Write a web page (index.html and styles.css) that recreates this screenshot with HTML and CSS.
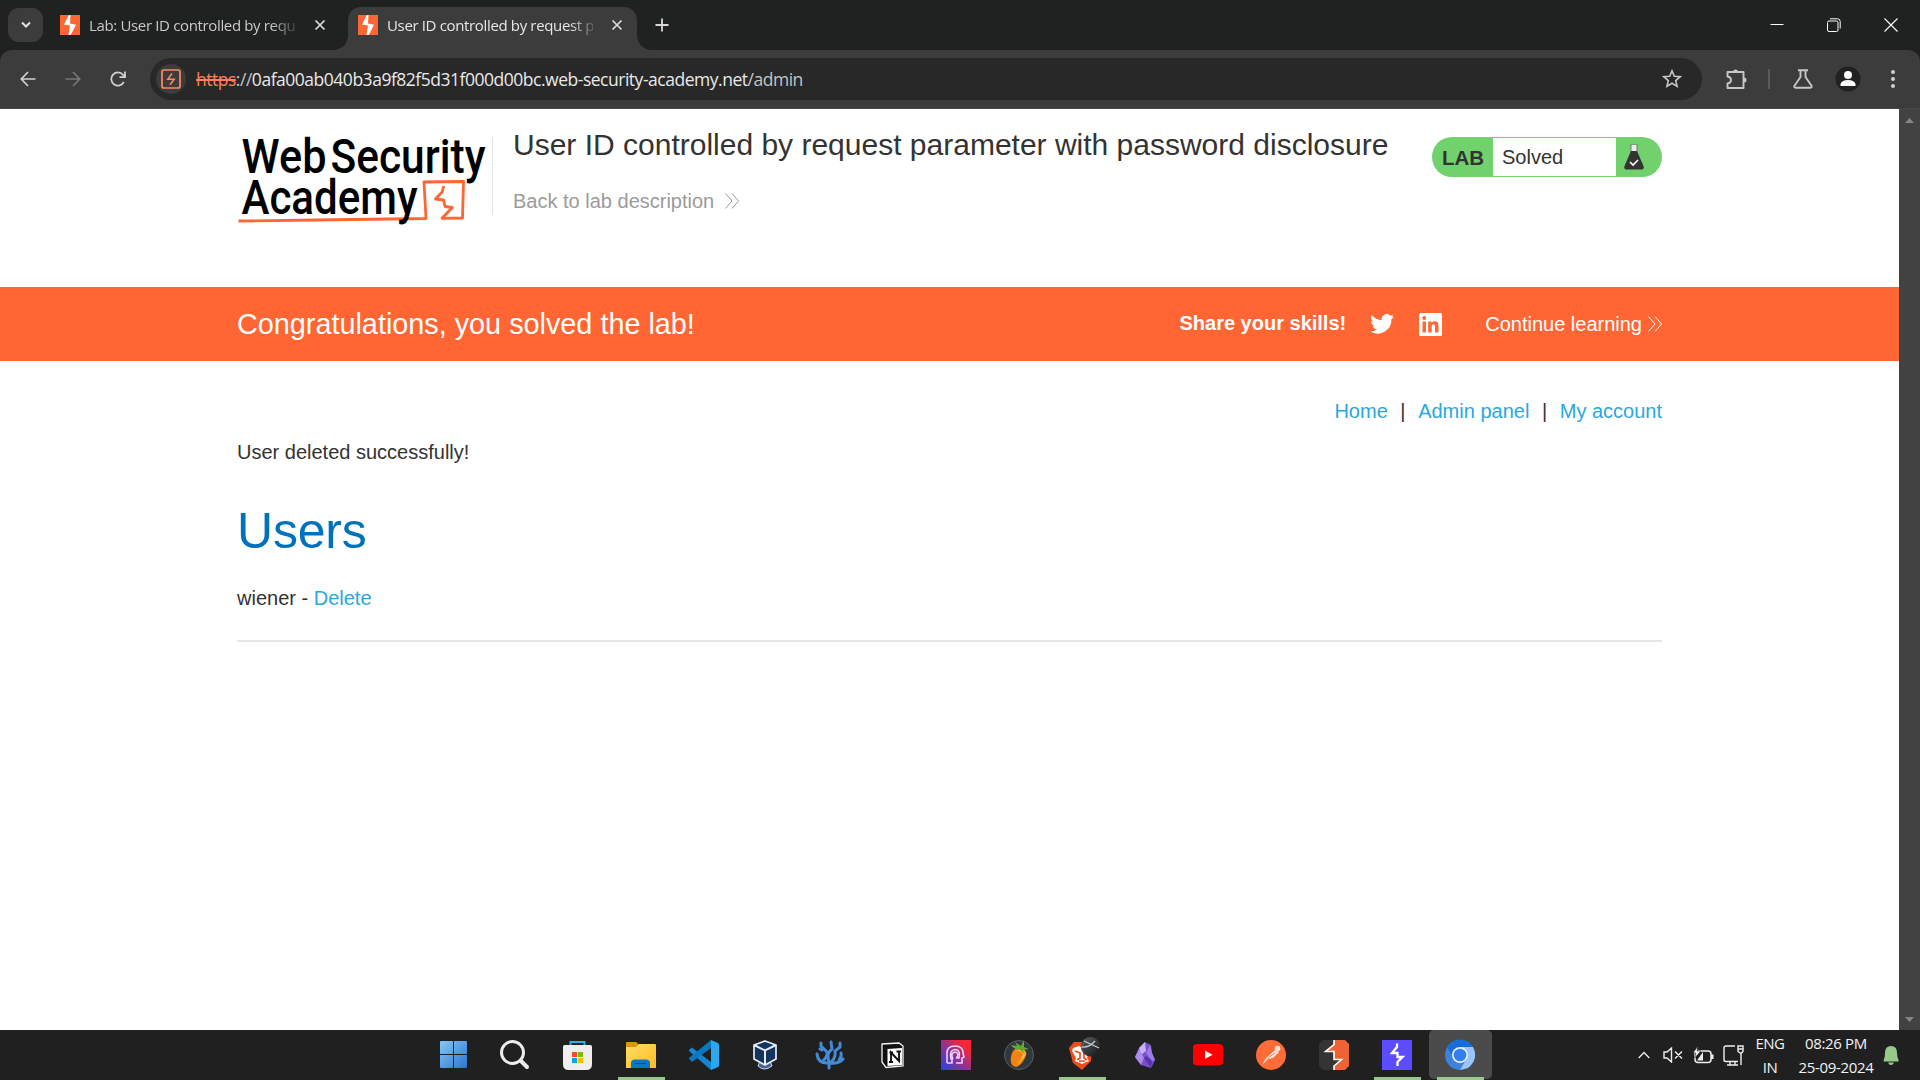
FILE: index.html
```html
<!DOCTYPE html>
<html lang="en">
<head>
<meta charset="utf-8">
<title>User ID controlled by request parameter with password disclosure</title>
<link rel="stylesheet" href="styles.css">
</head>
<body>
<svg class="defs" width="0" height="0">
  <symbol id="burp" viewBox="0 0 20 20"><rect width="20" height="20" fill="#ff6633"/><path d="M10.500 0L8.800 0L4 9.600L10 10.600L8.500 20L10.800 20L16 9.800L10 8.600Z" fill="#fff"/></symbol>
  <symbol id="x" viewBox="0 0 12 12"><path d="M1.500 1.500L10.500 10.500M10.500 1.500L1.500 10.500" stroke="#dcdcdc" stroke-width="1.700"/></symbol>
  <symbol id="more" viewBox="0 0 14 16"><path d="M.5 .5L7 8L.5 15.500M7 .5L13.500 8L7 15.500" fill="none" stroke="currentColor"/></symbol>
</svg>

<header class="tabs">
  <button class="tab-search"><svg width="10" height="8" viewBox="0 0 10 8"><path d="M1 1.500L5 5.500L9 1.500" fill="none" stroke="#e3e3e3" stroke-width="2"/></svg></button>
  <div class="tab">
    <svg class="favicon"><use href="#burp"/></svg>
    <span class="tab-title">Lab: User ID controlled by request</span>
    <svg class="close"><use href="#x"/></svg>
  </div>
  <div class="tab active">
    <svg class="favicon"><use href="#burp"/></svg>
    <span class="tab-title">User ID controlled by request parameter</span>
    <svg class="close"><use href="#x"/></svg>
  </div>
  <svg class="new-tab" width="14" height="14" viewBox="0 0 14 14"><path d="M7 .5V13.500M.5 7H13.500" stroke="#d8d8d8" stroke-width="1.800"/></svg>
  <div class="window-controls">
    <svg width="14" height="14" viewBox="0 0 14 14"><path d="M.5 6.500H13.500" stroke="#fff"/></svg>
    <svg width="14" height="14" viewBox="0 0 14 14" fill="none" stroke="#fff"><rect x=".5" y="3" width="10.500" height="10.500" rx="1.500"/><path d="M3 .8H10.500Q13.200 .8 13.200 3.500V10.500"/></svg>
    <svg width="14" height="14" viewBox="0 0 14 14"><path d="M.5 .5L13.500 13.500M13.500 .5L.5 13.500" stroke="#fff" stroke-width="1.100"/></svg>
  </div>
</header>

<div class="toolbar-bg"><div class="toolbar">
  <div class="nav-buttons">
    <svg width="16" height="16" viewBox="0 0 16 16" fill="none" stroke="#d0d0d0" stroke-width="1.700"><path d="M15.500 8H1.500M8 1L1.300 8L8 15"/></svg>
    <svg width="16" height="16" viewBox="0 0 16 16" fill="none" stroke="#777" stroke-width="1.700"><path d="M.5 8H14.500M8 1L14.700 8L8 15"/></svg>
    <svg width="16" height="16" viewBox="0 0 16 16" fill="none" stroke="#d0d0d0" stroke-width="1.800"><path d="M13.800 11A6.600 6.600 0 1 1 13 3.800L15 6M15 .5V6.200H9.500"/></svg>
  </div>
  <div class="omnibox">
    <span class="site"><svg width="20" height="20" viewBox="0 0 20 20" fill="none" stroke="#ff8a65" stroke-width="1.700"><rect x="1" y="1" width="18" height="18" rx="2"/><path d="M11 4.500L6.800 10.200H13.200L9 15.800" stroke-width="1.500"/></svg></span>
    <span class="url"><s>https</s><span class="scheme">://</span>0afa00ab040b3a9f82f5d31f000d00bc.web-security-academy.net<span class="path">/admin</span></span>
    <svg class="star" width="20" height="20" viewBox="0 0 20 20"><path d="M10 1.800L12.300 7.200L18.200 7.700L13.700 11.600L15.100 17.400L10 14.300L4.900 17.400L6.300 11.600L1.800 7.700L7.700 7.200Z" fill="none" stroke="#c7c7c7" stroke-width="1.600"/></svg>
  </div>
  <div class="tools">
    <svg width="22" height="22" viewBox="0 0 22 22"><path d="M2.500 4H18.500V20H2.500V15.500Q6 15 6 12T2.500 8.500Z" fill="none" stroke="#c7c7c7" stroke-width="1.900" stroke-linejoin="round"/><path d="M8 4A2.500 2.500 0 0 1 13 4ZM19 9.500A2.500 2.500 0 0 1 19 14.500Z" fill="#c7c7c7"/></svg>
    <i></i>
    <svg width="20" height="20" viewBox="0 0 20 20"><path d="M5 1.300H15M7.500 1.500V8L1.300 17Q1 18.700 2.500 18.700H17.500Q19 18.700 18.700 17L12.500 8V1.500" fill="none" stroke="#c7c7c7" stroke-width="1.900"/></svg>
    <svg width="26" height="26" viewBox="0 0 26 26"><circle cx="13" cy="13" r="12.500" fill="#202121"/><circle cx="13" cy="9" r="4" fill="#fff"/><path d="M5.500 20V18Q7 14 13 14T20.500 18V20Z" fill="#fff"/></svg>
    <svg width="6" height="20" viewBox="0 0 6 20" fill="#d0d0d0"><circle cx="3" cy="3" r="2"/><circle cx="3" cy="10" r="2"/><circle cx="3" cy="17" r="2"/></svg>
  </div>
</div></div>

<div class="viewport">
  <main class="page">
    <section class="container lab-header">
      <svg class="logo" width="256" height="90" viewBox="0 0 256 90">
        <g fill="none" stroke="#ff6633" stroke-width="2.800" stroke-linejoin="round"><path d="M1.500 84Q40 83.500 80 83T189 81.500L187 45L226.500 44.500L225.500 81L205 81.300L215.300 70.500L208 69.500L206.500 63L198.500 62L205.300 54.700L206.700 49"/></g>
        <g class="logo-text"><text x="4.500" y="35.700" textLength="85" lengthAdjust="spacingAndGlyphs">Web</text><text x="93.500" y="35.700" textLength="155" lengthAdjust="spacingAndGlyphs">Security</text><text x="4.500" y="77" textLength="176" lengthAdjust="spacingAndGlyphs">Academy</text></g>
      </svg>
      <div class="title">
        <h2>User ID controlled by request parameter with password disclosure</h2>
        <a>Back to lab description <svg width="14" height="16"><use href="#more"/></svg></a>
      </div>
      <div class="status"><b>LAB</b><p>Solved</p><span><svg width="20" height="26" viewBox="0 0 20 26"><path d="M6 1H14" stroke="#777"/><path d="M7 1V8H13V1" fill="#eee" stroke="#777"/><path d="M7 7H13L19.500 22Q20.500 25.500 17 25.500H3Q-.5 25.500 .5 22Z" fill="#333332"/><path d="M6 18L9 21L14 16" fill="none" stroke="#fff" stroke-width="1.600"/></svg></span></div>
    </section>
    <section class="banner"><div class="container">
      <h4>Congratulations, you solved the lab!</h4>
      <div class="share">
        <b>Share your skills!</b>
        <svg class="twitter" width="24" height="20" viewBox="0 0 24 20"><path d="M24 2.400a10 10 0 0 1-2.800.8A5 5 0 0 0 23.300.5a10 10 0 0 1-3.100 1.200A4.900 4.900 0 0 0 11.800 6.200 14 14 0 0 1 1.700 1 4.900 4.900 0 0 0 3.200 7.600 5 5 0 0 1 1 7a4.900 4.900 0 0 0 3.900 4.800 5 5 0 0 1-2.200.1 4.900 4.900 0 0 0 4.600 3.400A10 10 0 0 1 0 17.300 14 14 0 0 0 21.500 5a10 10 0 0 0 2.500-2.600Z" fill="#fff"/></svg>
        <svg class="linkedin" width="23" height="23" viewBox="0 0 23 23"><rect width="23" height="23" rx="1.500" fill="#fff"/><path d="M3.500 8.500H7V19.500H3.500ZM9.200 8.500H12.500V10C14.500 7.300 19.500 7.500 19.500 12.500V19.500H16V13.500C16 10.300 12.700 10.500 12.700 13.500V19.500H9.200Z" fill="#ff6633"/><circle cx="5.200" cy="5" r="2" fill="#ff6633"/></svg>
        <a>Continue learning <svg width="14" height="16"><use href="#more"/></svg></a>
      </div>
    </div></section>
    <section class="container content">
      <nav><a>Home</a><i>|</i><a>Admin panel</a><i>|</i><a>My account</a></nav>
      <p class="message">User deleted successfully!</p>
      <h1>Users</h1>
      <p class="user">wiener - <a>Delete</a></p>
      <hr>
    </section>
  </main>
  <aside class="scrollbar"><svg width="9" height="5" viewBox="0 0 9 5"><path d="M0 5L4.500 0L9 5Z" fill="#858585"/></svg><svg width="9" height="5" viewBox="0 0 9 5"><path d="M0 0L4.500 5L9 0Z" fill="#858585"/></svg></aside>
</div>

<footer class="taskbar">
  <div class="apps">
    <div class="app start"><svg viewBox="0 0 30 30"><defs><linearGradient id="win" x2="1" y2="1"><stop stop-color="#83c9f5"/><stop offset="1" stop-color="#2e73ce"/></linearGradient><linearGradient id="fold" x2="1" y2="1"><stop stop-color="#ffdc68"/><stop offset="1" stop-color="#fbbd22"/></linearGradient><linearGradient id="head" x1="0" y1="1" x2="1" y2="0"><stop stop-color="#2044e8"/><stop offset=".5" stop-color="#9b3188"/><stop offset=".8" stop-color="#f52736"/></linearGradient><linearGradient id="ball" x2="1" y2="1"><stop stop-color="#60656b"/><stop offset="1" stop-color="#101316"/></linearGradient></defs><path d="M3 1H15V14H2V2Q2 1 3 1ZM16 1H28Q29 1 29 2V14H16ZM2 15H15V28H3Q2 28 2 27ZM16 15H29V27Q29 28 28 28H16Z" fill="url(#win)"/></svg></div>
    <div class="app"><svg viewBox="0 0 30 30" fill="none" stroke="#ededed"><circle cx="12.500" cy="12.500" r="11" stroke-width="3"/><path d="M20.500 20.500L27 27" stroke-width="4" stroke-linecap="round"/></svg></div>
    <div class="app"><svg viewBox="0 0 30 30"><path d="M7.500 6V2H21.500V6" fill="none" stroke="#2bb0ea" stroke-width="2"/><path d="M1.500 5H27.500Q29 5 29 6.500V24Q29 30 23.500 30H5.500Q0 30 0 24V6.500Q0 5 1.500 5Z" fill="#eee"/><path d="M9 12H14V17H9Z" fill="#f25022"/><path d="M15 12H20V17H15Z" fill="#7fba00"/><path d="M9 18H14V23H9Z" fill="#00a4ef"/><path d="M15 18H20V23H15Z" fill="#ffb900"/></svg></div>
    <div class="app running"><svg viewBox="0 0 30 30"><path d="M0 3Q0 2 1 2H10L13 4.500L11 8H0Z" fill="#dc9700"/><path d="M0 7H10L13 4H29Q30 4 30 5V28H0Z" fill="url(#fold)"/><path d="M5 28V23Q5 19.500 9 19.500H20Q24 19.500 24 23V28Z" fill="#0b76c5"/><path d="M9 23.500H20" stroke="#064b83"/></svg></div>
    <div class="app"><svg viewBox="0 0 30 30"><path d="M0 10L3 7.500L22 22V30L0 11Z" fill="#1187d3"/><path d="M0 19L3 22L22 8V0L0 18Z" fill="#0878c2"/><path d="M22 0L29 3Q30 4 30 5V25Q30 27 29 27L22 30Z" fill="#27a8f1"/></svg></div>
    <div class="app vbox"><svg viewBox="0 0 30 30"><path d="M10 21L8 26Q14 32 22 26L20 21" fill="#46628d" stroke="#cbd8ed"/><path d="M15 1L26 5V19L15 25L4 19V5Z" fill="#12345f" stroke="#e6edf7" stroke-width="1.700"/><path d="M4 5L15 10.500L26 5M15 10.500V25" fill="none" stroke="#e6edf7" stroke-width="2"/></svg></div>
    <div class="app"><svg viewBox="0 0 30 30" fill="none" stroke="#438bd6" stroke-width="3" stroke-linecap="round"><path d="M14 28V23Q3 24 2 14M14 23Q24 24 28 19M8 21Q13 16 12 12L6 6V3M7 10L5 9M14 22Q11 13 17 9L16 2M17 21Q21 17 20 11L25 7V3M24 20Q27 17 26 13"/></svg></div>
    <div class="app"><svg viewBox="0 0 30 30"><path d="M4 4L21 3L25 6V26L8 27.500L4 22Z" fill="#111" stroke="#f4f4f4" stroke-width="1.300"/><path d="M9.500 9L24 8V25L9.500 26Z" fill="#fff"/><path d="M13 21.500V12.500L21 21V11.500M11.500 12.500H15M11 22H15M18.500 11.500H23" fill="none" stroke="#111" stroke-width="1.900"/></svg></div>
    <div class="app"><svg viewBox="0 0 30 30"><path d="M0 0H30V30H0Z" fill="url(#head)"/><g fill="none" stroke="#e7cfff" stroke-width="1.600"><path d="M6 23H11V19M6 23V13Q6 6 14 6Q22 6 22 13L23 17L21 18V23H15"/><path d="M12 19H10Q8 10 14 9.500Q20 10 18 18H15M12 19Q9 13 14 12Q19 13 15.500 18"/></g></svg></div>
    <div class="app"><svg viewBox="0 0 30 30"><circle cx="15" cy="15" r="14.500" fill="#30383d" stroke="#566067"/><path d="M8 13Q11 7 17 8Q25 11 21 18Q17 26 12 27Q4 25 8 13Z" fill="#f18315"/><path d="M10 12Q17 9 19 15L13 25Q21 18 22 13L18 8Z" fill="#ffb739"/><path d="M16 10Q9 9 7 5L13 6L11 2L17 6L20 0V7L25 9L19 10L21 14Z" fill="#66a72d"/></svg></div>
    <div class="app running"><svg viewBox="0 0 30 30"><g transform="translate(2)"><path d="M5 2H19L23 6L22 21L13 30L4 23L0 8Z" fill="#f24a18"/><path d="M4 8L10 6L13 8L17 8L20 11L18 18L20 21L13 24L6 21L7 18L3 11Z" fill="#fff"/><path d="M6 11L11 13L11 18L8 20M19 11L15 13V18L18 20M10 21H16" stroke="#f24a18" stroke-width="1.700" fill="none"/></g><circle cx="23.500" cy="6.700" r="9.700" fill="url(#ball)"/><path d="M14.500 7Q22 8 28 1M17 1L32 8" stroke="#c7cbce" stroke-width="1.300" fill="none"/></svg></div>
    <div class="app"><svg viewBox="0 0 30 30"><path d="M15 2L21 5L22 13L25 20L21 28L11 25L5 17L9 8Z" fill="#7950c9"/><path d="M15 2L9 8L11 15L16 11Z" fill="#c6b0fa"/><path d="M9 9L5 17L11 25L14 18Z" fill="#a98be9"/><path d="M20 5L16 13L22 21L25 20L22 13Z" fill="#9f7bea"/><path d="M14 18L21 28L22 21L16 16Z" fill="#5932aa"/></svg></div>
    <div class="app"><svg viewBox="0 0 30 30"><rect y="4" width="30" height="21.500" rx="4" fill="#f00"/><path d="M12 10.500V19L19.500 14.800Z" fill="#fff"/></svg></div>
    <div class="app"><svg viewBox="0 0 30 30"><circle cx="15" cy="15" r="15" fill="#ff6c37"/><path d="M19 10L23 12L17 18L12 19L6 25L10 18Z" fill="#f9e5dc"/><path d="M12 18L19 13" stroke="#ff6c37" stroke-width=".8"/><circle cx="21.500" cy="8.500" r="2.800" fill="#f9e5dc"/></svg></div>
    <div class="app"><svg viewBox="0 0 30 30"><path d="M4 0H15V30H4L0 26V4Z" fill="#343434"/><path d="M15 0H26L30 4V26L26 30H15V11.500H6L15 4.500Z" fill="#ee6333"/><path d="M15 19.500H22.500L15 26Z" fill="#343434"/><path d="M15 0V4.500L6.500 11.500H15V19.500H22.500L15 26V30" fill="none" stroke="#fff" stroke-width="1.600"/></svg></div>
    <div class="app running"><svg viewBox="0 0 30 30"><path d="M0 0H30V30H0Z" fill="#5b4dff"/><path d="M15 3.500V7L10 13H15.500V17H20.500L15.500 22V26" fill="none" stroke="#fff" stroke-width="2.300"/></svg></div>
    <div class="app running selected"><svg viewBox="0 0 30 30"><circle cx="15" cy="15" r="15" fill="#3d82dc"/><path d="M2 7A15 15 0 0 1 28 7L15 7L9 18Z" fill="#176edb"/><path d="M15 7H28Q34 19 23 28L15 30L22 18Z" fill="#9bc4fb"/><circle cx="15" cy="15" r="8" fill="#e5f0ff"/><circle cx="15" cy="15" r="6.300" fill="#347ff0"/></svg></div>
  </div>
  <div class="tray">
    <svg width="12" height="8" viewBox="0 0 12 8"><path d="M.7 7L6 1.500L11.300 7" fill="none" stroke="#eee" stroke-width="1.300"/></svg>
    <svg class="speaker" width="20" height="16" viewBox="0 0 20 16"><path d="M1 5H4L8.500 1V15L4 11H1ZM12 4.500L19 11.500M19 4.500L12 11.500" fill="none" stroke="#eee" stroke-width="1.400"/></svg>
    <svg class="battery" width="21" height="18" viewBox="0 0 21 18"><rect x="2" y="5" width="16" height="11.500" rx="3" fill="none" stroke="#eee" stroke-width="1.500"/><path d="M4 14.500L10 6V14.500ZM18 8.500H20.500V13H18Z" fill="#eee"/><path d="M5 0L0 7H3L1.500 12L8 5H4Z" fill="#fff" stroke="#202020" stroke-width=".6"/></svg>
    <svg class="network" width="21" height="21" viewBox="0 0 21 21"><path d="M12 1H3Q1 1 1 3V15Q1 16.500 3 16.500H15M7 17V20M12 17V20M4 20H15M18 8V20M15 1H20V6.500L18 8.500L15 6.500ZM15 4H20" fill="none" stroke="#eee" stroke-width="1.400"/></svg>
    <div class="lang">ENG<br>IN</div>
    <div class="clock">08:26 PM<br><span>25-09-2024</span></div>
    <svg class="bell" width="16" height="19" viewBox="0 0 16 19"><path d="M1 13Q2 11 2 7Q2 0 8 0T14 7Q14 11 15.500 14V15.500H.5ZM5 16.500H11Q10 19 8 19T5 16.500Z" fill="#98c98b"/></svg>
  </div>
</footer>
</body>
</html>
```

FILE: styles.css
```css
* { box-sizing: border-box; }
body { margin: 0; width: 1920px; height: 1080px; overflow: hidden; display: flex; flex-direction: column; background: #fff; color: #333332; font: 20px/25px "Liberation Sans", Arial, sans-serif; }
h1, h2, h4, p { margin: 0; font-weight: 400; }
svg { flex: none; display: block; }
.defs { position: absolute; }

.tabs { height: 50px; background: #202121; padding: 7px 18px 0 8px; display: flex; font: 15px/20px "Open Sans", sans-serif; color: #c9c9c9; }
.tab-search { width: 35px; height: 34px; margin: 1px 7px 0 0; border: 0; border-radius: 11px; background: #3c3c3c; display: grid; place-items: center; }
.tab { width: 289px; height: 43px; padding: 0 14px 8px 10px; display: flex; align-items: center; }
.tab:not(.active) { width: 298px; padding-right: 22px; }
.favicon { width: 20px; height: 20px; }
.tab-title { width: 210px; margin: 0 18px 0 9px; overflow: hidden; white-space: nowrap; letter-spacing: -.35px; -webkit-mask-image: linear-gradient(90deg, #000 182px, transparent 212px); }
.close { width: 12px; height: 12px; }
.active { position: relative; background: #3c3c3c; border-radius: 13px 13px 0 0; color: #e6e6e6; }
.active::before, .active::after { content: ""; position: absolute; bottom: 0; width: 14px; height: 14px; }
.active::before { left: -14px; background: radial-gradient(circle at 0 0, transparent 13.500px, #3c3c3c 14px); }
.active::after { right: -14px; background: radial-gradient(circle at 100% 0, transparent 13.500px, #3c3c3c 14px); }
.new-tab { margin: 11px 0 0 18px; }
.window-controls { margin: 11px 4px 0 auto; display: flex; gap: 43px; }

.toolbar-bg { height: 59px; background: #202121; }
.toolbar { height: 59px; background: #3c3c3c; border-radius: 12px 12px 0 0; border-bottom: 1px solid #484545; display: flex; align-items: flex-start; padding: 8px 24px 0 20px; }
.nav-buttons { display: flex; gap: 29px; width: 130px; padding-top: 13px; }
.omnibox { width: 1552px; height: 42px; border-radius: 21px; background: #282828; display: flex; align-items: center; padding: 0 20px 0 6px; }
.site { width: 30px; height: 30px; border-radius: 50%; background: #3c3c3c; display: grid; place-items: center; }
.url { margin-left: 10px; font: 17.500px/26px "Open Sans", sans-serif; letter-spacing: -.48px; color: #e8e8e8; white-space: nowrap; }
.url s { color: #ff7f5c; text-decoration-thickness: 2px; }
.scheme, .path { color: #c4c4c4; }
.star { margin-left: auto; }
.tools { display: flex; align-items: center; height: 42px; margin-left: 23px; }
.tools i { width: 2px; height: 20px; background: #5c5c5c; margin: 0 23px 0 21px; }
.tools svg:nth-of-type(3) { margin: 0 29px 0 22px; }

.viewport { height: 921px; display: flex; }
.page { width: 1899px; }
.container { width: 1425px; margin: 0 auto; }
.lab-header { height: 178px; display: flex; padding-top: 28px; }
.logo { overflow: visible; }
.logo-text { font: 500 47.500px Roboto, sans-serif; fill: #000; }
.title { height: 78px; margin-left: -1px; padding-left: 20px; border-left: 1px solid #e5e5e5; white-space: nowrap; }
.title h2 { font-size: 30px; line-height: 36px; margin-top: -10px; }
.title a { display: flex; align-items: center; gap: 11px; margin-top: 26px; line-height: 24px; color: #9b9b9b; }
.status { margin-left: auto; width: 230px; height: 40px; border-radius: 20px; background: #70d16d; display: flex; align-items: center; padding: 1px 0; }
.status b { width: 61px; padding-left: 10px; font-size: 20.500px; }
.status p { width: 123px; height: 38px; padding-left: 9px; line-height: 38px; background: #fff; }
.status span { margin-left: 8px; }

.banner { height: 74px; background: #ff6633; color: #fff; }
.banner .container { display: flex; align-items: center; height: 74px; }
.banner h4 { font-size: 28.800px; line-height: 34px; white-space: nowrap; }
.share { display: flex; align-items: center; margin-left: auto; }
.share b { margin-bottom: 2px; }
.twitter { margin-left: 24px; }
.linkedin { margin: 0 43px 0 25px; }
.share a { display: flex; align-items: center; gap: 6px; }

.content nav { display: flex; justify-content: flex-end; padding-top: 38px; gap: 12.600px; }
.content nav i { font-style: normal; }
a { color: #29a8e0; }
.banner a { color: #fff; }
.message { margin-top: 16px; }
h1 { margin-top: 36px; font-size: 50px; line-height: 60px; letter-spacing: -.2px; color: #0071bc; }
.user { margin-top: 25px; }
hr { height: 2px; border: 0; background: #e5e5e5; margin: 29px 0 0; }
.scrollbar { width: 21px; background: #424242; display: flex; flex-direction: column; align-items: center; justify-content: space-between; padding: 9px 0 8px; }

.taskbar { height: 50px; background: #202020; display: flex; color: #f2f2f2; font: 15px/24px "Open Sans", sans-serif; }
.apps { width: 1071px; margin-left: 421px; display: grid; grid-template-columns: repeat(17, 63px); }
.app { position: relative; height: 49px; padding: 10px 0 0 16px; }
.app svg { width: 30px; height: 30px; overflow: visible; }
.app.start { padding: 10px 0 0 17px; }
.app.vbox { padding-left: 14px; }
.running::after { content: ""; position: absolute; left: 8px; bottom: -1px; width: 47px; height: 3px; background: #98c98b; }
.selected { background: #4b4b4b; border-radius: 5px; }
.tray { display: flex; align-items: center; margin-left: 146px; white-space: nowrap; }
.speaker { margin-left: 13px; }
.battery { margin-left: 10px; }
.network { margin-left: 9px; }
.lang { width: 34px; margin-left: 9px; text-align: center; letter-spacing: -.5px; }
.clock { width: 82px; margin-left: 8px; text-align: center; letter-spacing: -.35px; }
.bell { margin-left: 6px; }
```
